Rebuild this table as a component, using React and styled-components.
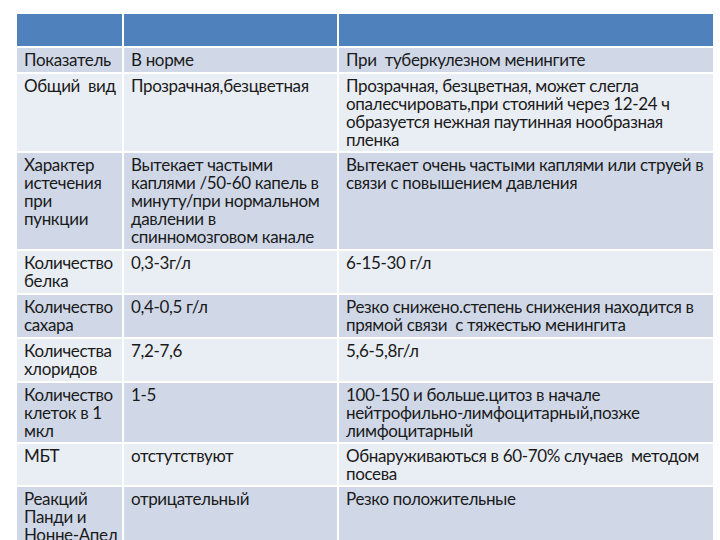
import React from "react";
import styled, { createGlobalStyle } from "styled-components";

const Global = createGlobalStyle`
  html, body { margin: 0; padding: 0; background: #ffffff; }
  body { font-family: Lato, "Open Sans", "Noto Sans", sans-serif; }
`;

const Page = styled.div`
  width: 720px;
  height: 540px;
  overflow: hidden;
  padding: 14px 7px 0 17px;
  box-sizing: border-box;
`;

const Grid = styled.div`
  display: grid;
  grid-template-columns: 105px 213px 374px;
  column-gap: 2px;
  row-gap: 2px;
  background: #ffffff;
`;

const Cell = styled.div`
  background: ${(p) => (p.$head ? "#4f81bd" : p.$dark ? "#d0d8e8" : "#e9edf4")};
  height: ${(p) => p.$h}px;
  box-sizing: border-box;
  padding: 3px 2px 0 7px;
  font-size: 17px;
  letter-spacing: -0.35px;
  line-height: 18px;
  color: #1a1a1a;
  white-space: ${(p) => (p.$label ? "pre" : "pre-wrap")};
  overflow: hidden;
`;

const rows = [
  { h: 24, c: ["Показатель", "В норме", "При  туберкулезном менингите"] },
  { h: 77, c: ["Общий  вид", "Прозрачная,безцветная", "Прозрачная, безцветная, может слегла опалесчировать,при стояний через 12-24 ч образуется нежная паутинная нообразная пленка"] },
  { h: 96, c: ["Характер\nистечения\nпри\nпункции", "Вытекает частыми каплями /50-60 капель в минуту/при нормальном давлении в спинномозговом канале", "Вытекает очень частыми каплями или струей в связи с повышением давления"] },
  { h: 42, c: ["Количество\nбелка", "0,3-3г/л", "6-15-30 г/л"] },
  { h: 42, c: ["Количество\nсахара", "0,4-0,5 г/л", "Резко снижено.степень снижения находится в прямой связи  с тяжестью менингита"] },
  { h: 42, c: ["Количества\nхлоридов", "7,2-7,6", "5,6-5,8г/л"] },
  { h: 59, c: ["Количество\nклеток в 1\nмкл", "1-5", "100-150 и больше.цитоз в начале нейтрофильно-лимфоцитарный,позже лимфоцитарный"] },
  { h: 41, c: ["МБТ", "отстутствуют", "Обнаруживаються в 60-70% случаев  методом посева"] },
  { h: 70, c: ["Реакций\nПанди и\nНонне-Апел", "отрицательный", "Резко положительные"] },
];

export default function App() {
  return (
    <Page>
      <Global />
      <Grid>
        <Cell $head $h={32} />
        <Cell $head $h={32} />
        <Cell $head $h={32} />
        {rows.map((r, i) =>
          r.c.map((t, j) => (
            <Cell key={i + "-" + j} $dark={i % 2 === 0} $label={j === 0} $h={r.h}>
              {t}
            </Cell>
          ))
        )}
      </Grid>
    </Page>
  );
}
